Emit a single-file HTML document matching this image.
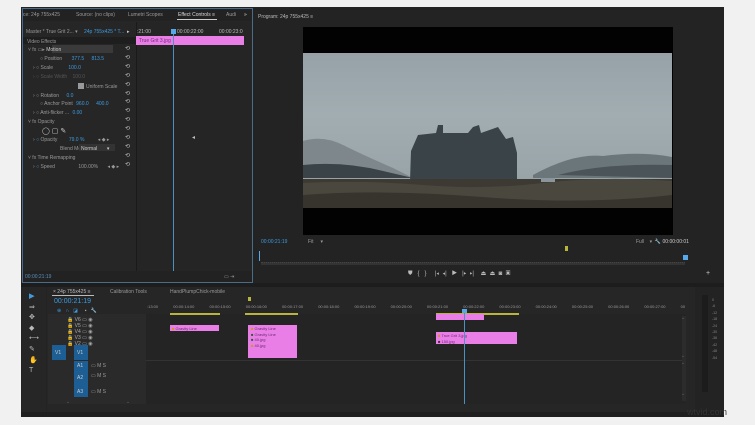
<!DOCTYPE html>
<html><head><meta charset="utf-8"><style>
*{margin:0;padding:0;box-sizing:border-box}
body{width:755px;height:425px;background:#f1f1f1;position:relative;overflow:hidden;font-family:"Liberation Sans",sans-serif;font-size:5px;color:#9a9a9a}
.a{position:absolute}
.blue{color:#3d9be0}
.t{position:absolute;white-space:nowrap}
</style></head><body>
<div class="a" style="left:21px;top:7px;width:703px;height:410px;background:#232323"></div>
<div class="a" style="left:22px;top:8px;width:231px;height:275px;background:#262626;border:1px solid #4b6b8a"></div>
<div class="a" style="left:23px;top:9px;width:229px;height:12px;background:#222"></div>
<div class="t" style="left:23px;top:12px">ce: 24p 755x425</div>
<div class="t" style="left:76px;top:12px">Source: (no clips)</div>
<div class="t" style="left:128px;top:12px">Lumetri Scopes</div>
<div class="t" style="left:178px;top:12px;color:#ddd">Effect Controls ≡</div>
<div class="a" style="left:177px;top:19px;width:40px;height:1px;background:#ccc"></div>
<div class="t" style="left:226px;top:12px">Audi</div>
<div class="t" style="left:244px;top:12px;color:#ddd">»</div>
<div class="a" style="left:23px;top:22px;width:113px;height:260px;background:#262626"></div>
<div class="t" style="left:26px;top:29px">Master * True Grit 2...  ▾</div>
<div class="t blue" style="left:84px;top:29px">24p 755x425 * T...</div>
<div class="t" style="left:127px;top:29px;color:#ccc">▸</div>
<div class="a" style="left:23px;top:37px;width:113px;height:7px;background:#1e1e1e"></div>
<div class="t" style="left:27px;top:39px">Video Effects</div>
<div class="a" style="left:52px;top:45px;width:61px;height:8px;background:#3a3a3a"></div>
<div class="t" style="left:28px;top:47px">˅ fx  ▭▸ <span style="color:#ccc">Motion</span></div>
<div class="t" style="left:40px;top:56px">○ Position <span class="blue" style="margin-left:8px">377.5</span> <span class="blue" style="margin-left:6px">813.5</span></div>
<div class="t" style="left:33px;top:65px">›  ○ Scale <span class="blue" style="margin-left:14px">100.0</span></div>
<div class="t" style="left:33px;top:74px;color:#555">›  ○ Scale Width <span style="margin-left:4px">100.0</span></div>
<div class="a" style="left:78px;top:83px;width:6px;height:6px;background:#999"></div>
<div class="t" style="left:86px;top:84px">Uniform Scale</div>
<div class="t" style="left:33px;top:93px">›  ○ Rotation <span class="blue" style="margin-left:6px">0.0</span></div>
<div class="t" style="left:40px;top:101px">○ Anchor Point <span class="blue" style="margin-left:2px">960.0</span> <span class="blue" style="margin-left:6px">400.0</span></div>
<div class="t" style="left:33px;top:110px">›  ○ Anti-flicker ... <span class="blue" style="margin-left:2px">0.00</span></div>
<div class="t" style="left:28px;top:119px">˅ fx  Opacity</div>
<div class="t" style="left:42px;top:127px;color:#ccc;font-size:7px">◯ ▢ ✎</div>
<div class="t" style="left:33px;top:137px">›  <span class="blue">○</span> Opacity <span class="blue" style="margin-left:10px">79.0 %</span> <span style="margin-left:12px">◂ ◆ ▸</span></div>
<div class="t" style="left:60px;top:146px">Blend Mode</div>
<div class="a" style="left:79px;top:144px;width:36px;height:7px;background:#333"></div>
<div class="t" style="left:81px;top:146px;color:#ccc">Normal &nbsp; &nbsp; &nbsp; ▾</div>
<div class="t" style="left:28px;top:155px">˅ fx  Time Remapping</div>
<div class="t" style="left:33px;top:164px">›  <span class="blue">○</span> Speed <span style="margin-left:22px">100.00%</span> <span style="margin-left:8px">◂ ◆ ▸</span></div>
<div class="a" style="left:125px;top:45px;width:8px;height:125px;color:#bbb;font-size:6px;line-height:8.9px">⟲<br>⟲<br>⟲<br>⟲<br>⟲<br>⟲<br>⟲<br>⟲<br>⟲<br>⟲<br>⟲<br>⟲<br>⟲<br>⟲</div>
<div class="a" style="left:136px;top:22px;width:115px;height:260px;background:#252525;border-left:1px solid #1a1a1a"></div>
<div class="t" style="left:137px;top:29px;color:#bbb">:21:00</div>
<div class="t" style="left:177px;top:29px;color:#bbb">00:00:22:00</div>
<div class="t" style="left:219px;top:29px;color:#bbb">00:00:23:0</div>
<div class="a" style="left:136px;top:36px;width:108px;height:9px;background:#e87ee6"></div>
<div class="t" style="left:139px;top:38px;color:#7a2a80">True Grit 3.jpg</div>
<div class="a" style="left:173px;top:29px;width:1px;height:243px;background:#4a90c0"></div>
<div class="a" style="left:171px;top:29px;width:5px;height:5px;background:#56a8e8"></div>
<div class="t" style="left:192px;top:134px;color:#bbb;font-size:6px">◂</div>
<div class="a" style="left:23px;top:271px;width:229px;height:11px;background:#222"></div>
<div class="t" style="left:25px;top:274px;color:#5a8fbf">00:00:21:19</div>
<div class="t" style="left:224px;top:274px">▭ ⇥</div>
<div class="t" style="left:258px;top:14px;color:#bbb">Program: 24p 755x425 ≡</div>
<div class="a" style="left:303px;top:27px;width:370px;height:208px;background:#020202"></div>
<div class="a" style="left:303px;top:53px;width:369px;height:155px;background:linear-gradient(#96a2a8,#a2adb2 40%,#99a4a9 80%,#7e888d);overflow:hidden">
<svg width="369" height="155" viewBox="0 0 369 155" style="position:absolute;left:0;top:0">
<path d="M0 88 Q20 82 40 92 T90 115 L110 125 L0 125Z" fill="#7d878c"/>
<path d="M0 112 Q40 108 80 118 L110 125 L0 125Z" fill="#3a4347"/>
<path d="M230 122 Q270 100 300 103 Q340 98 369 104 L369 125 L230 125Z" fill="#6b767b"/>
<path d="M255 122 Q300 110 369 112 L369 125 Z" fill="#4a5459"/>
<path d="M107 128 L108 98 L115 82 L133 80 L135 72 L140 72 L140 80 L165 80 L170 74 L176 72 L178 80 L195 74 L203 86 L210 84 L214 100 L214 128Z" fill="#394348"/>
<rect x="0" y="126" width="369" height="29" fill="#3c3a32"/>
<path d="M0 130 Q60 127 120 132 T240 130 T369 128 L369 155 L0 155Z" fill="#4a483e"/>
<path d="M0 142 Q80 136 180 144 T369 142 L369 155 L0 155Z" fill="#36342d"/>
<rect x="238" y="125" width="14" height="4" fill="#8a969b"/>
</svg></div>
<div class="t" style="left:261px;top:239px;color:#3d9be0">00:00:21:19</div>
<div class="t" style="left:308px;top:239px">Fit &nbsp; &nbsp; ▾</div>
<div class="t" style="left:636px;top:239px">Full &nbsp; &nbsp;▾ &nbsp;<span style="color:#ccc">🔧</span> <span style="color:#ccc">00:00:00:01</span></div>
<div class="a" style="left:565px;top:246px;width:3px;height:5px;background:#b9b43a"></div>
<div class="a" style="left:683px;top:255px;width:5px;height:5px;background:#56a8e8"></div>
<div class="a" style="left:259px;top:251px;width:1px;height:10px;background:#56a8e8"></div>
<div class="a" style="left:261px;top:262px;width:424px;height:3px;background:#333;border-top:1px dotted #444"></div>
<div class="t" style="left:408px;top:270px;color:#bbb;font-size:6px;letter-spacing:0">⛊ &nbsp; { &nbsp; } &nbsp; &nbsp; |◂ &nbsp;◂| &nbsp; ▶ &nbsp; |▸ &nbsp;▸| &nbsp; &nbsp;⏏ &nbsp;⏏ &nbsp;◙ &nbsp;▣</div>
<div class="t" style="left:706px;top:270px;color:#ccc;font-size:7px">+</div>
<div class="a" style="left:21px;top:283px;width:703px;height:4px;background:#1d1d1d"></div>
<div class="a" style="left:22px;top:287px;width:24px;height:125px;background:#262626"></div>
<div class="t" style="left:29px;top:292px;color:#bbb;font-size:7px;line-height:10.6px">▶<br>⇒<br>✥<br>◆<br>⟷<br>✎<br>✋<br>T</div>
<div class="t" style="left:29px;top:292px;color:#3d9be0;font-size:7px">▶</div>
<div class="a" style="left:47px;top:287px;width:648px;height:125px;background:#262626"></div>
<div class="t" style="left:53px;top:289px;color:#bbb">× 24p 755x425 ≡</div>
<div class="a" style="left:52px;top:295px;width:42px;height:1px;background:#bbb"></div>
<div class="t" style="left:110px;top:289px">Calibration Tools</div>
<div class="t" style="left:170px;top:289px">HandPlumpChick-mobile</div>
<div class="t" style="left:54px;top:298px;color:#3d9be0;font-size:7px">00:00:21:19</div>
<div class="t" style="left:57px;top:308px;color:#3d9be0;font-size:5px">⊕ &nbsp; ∩ &nbsp; ◪ &nbsp; &nbsp; <span style="color:#aaa">▪ &nbsp; 🔧</span></div>
<div class="a" style="left:48px;top:314px;width:98px;height:90px;background:#2a2a2a"></div>
<div class="t" style="left:67px;top:317px;line-height:6px;color:#aaa">🔒 V6 ▭ ◉<br>🔒 V5 ▭ ◉<br>🔒 V4 ▭ ◉<br>🔒 V3 ▭ ◉<br>🔒 V2 ▭ ◉</div>
<div class="a" style="left:52px;top:345px;width:14px;height:15px;background:#1d5e94"></div>
<div class="a" style="left:74px;top:345px;width:14px;height:15px;background:#1d5e94"></div>
<div class="a" style="left:74px;top:361px;width:14px;height:36px;background:#1d5e94"></div>
<div class="t" style="left:55px;top:350px;color:#ccc">V1</div>
<div class="t" style="left:77px;top:350px;color:#ccc">V1</div>
<div class="t" style="left:77px;top:363px;color:#ccc">A1</div><div class="t" style="left:77px;top:375px;color:#ccc">A2</div><div class="t" style="left:77px;top:389px;color:#ccc">A3</div>
<div class="t" style="left:91px;top:363px">▭ M S</div><div class="t" style="left:91px;top:373px">▭ M S</div><div class="t" style="left:91px;top:389px">▭ M S</div>
<div class="t" style="left:67px;top:400px">◦ &nbsp; &nbsp; &nbsp; &nbsp; &nbsp; &nbsp; &nbsp; &nbsp; &nbsp; &nbsp; &nbsp; &nbsp; &nbsp; &nbsp; &nbsp; &nbsp; &nbsp; &nbsp; &nbsp; &nbsp; &nbsp;◦</div>
<div class="a" style="left:146px;top:314px;width:540px;height:90px;background:#242424"></div>
<div class="a" style="left:146px;top:360px;width:540px;height:1px;background:#333"></div>
<div class="t" style="left:147px;top:304px;font-size:4px;word-spacing:14px">:13:00 00:00:14:00 00:00:15:00 00:00:16:00 00:00:17:00 00:00:18:00 00:00:19:00 00:00:20:00 00:00:21:00 00:00:22:00 00:00:23:00 00:00:24:00 00:00:25:00 00:00:26:00 00:00:27:00 00</div>
<div class="a" style="left:248px;top:297px;width:3px;height:4px;background:#b9b43a"></div>
<div class="a" style="left:170px;top:313px;width:50px;height:2px;background:#b9b43a"></div>
<div class="a" style="left:245px;top:313px;width:53px;height:2px;background:#b9b43a"></div>
<div class="a" style="left:436px;top:313px;width:83px;height:2px;background:#b9b43a"></div>
<div class="a" style="left:170px;top:325px;width:49px;height:6px;background:#e87ee6"></div>
<div class="a" style="left:248px;top:325px;width:49px;height:33px;background:#e87ee6"></div>
<div class="a" style="left:436px;top:314px;width:48px;height:6px;background:#e87ee6"></div>
<div class="a" style="left:436px;top:332px;width:81px;height:12px;background:#e87ee6"></div>
<div class="t" style="left:172px;top:326px;color:#6a2a70;font-size:4px;line-height:5.5px"><span style="color:#c9a000">■</span> Gravity Line</div>
<div class="t" style="left:251px;top:326px;color:#6a2a70;font-size:4px;line-height:5.6px"><span style="color:#c9a000">■</span> Gravity Line<br><span style="color:#2a5a2a">■</span> Gravity Line<br><span style="color:#2a5a2a">■</span> 40.jpg<br><span style="color:#c9a000">■</span> 40.jpg</div>
<div class="t" style="left:438px;top:333px;color:#6a2a70;font-size:4px;line-height:5.6px"><span style="color:#c9a000">■</span> True Grit 3.jpg<br><span style="color:#333">■</span> 150.jpg</div>
<div class="a" style="left:464px;top:312px;width:1px;height:92px;background:#4a90c0"></div>
<div class="a" style="left:462px;top:309px;width:5px;height:4px;background:#56a8e8"></div>
<div class="a" style="left:682px;top:316px;width:4px;height:85px;background:#2c2c2c"></div>
<div class="t" style="left:682px;top:316px;color:#999">◦</div><div class="t" style="left:682px;top:354px;color:#999">◦</div><div class="t" style="left:682px;top:361px;color:#999">◦</div><div class="t" style="left:682px;top:392px;color:#999">◦</div>
<div class="a" style="left:695px;top:287px;width:29px;height:125px;background:#232323"></div>
<div class="a" style="left:702px;top:295px;width:6px;height:97px;background:#1c1c1c"></div>
<div class="t" style="left:712px;top:297px;font-size:3.5px;line-height:6.4px;color:#888">0<br>-6<br>-12<br>-18<br>-24<br>-30<br>-36<br>-42<br>-48<br>-54</div>
<div class="a" style="left:21px;top:412px;width:703px;height:5px;background:#1f1f1f"></div>
<div class="t" style="left:687px;top:407px;color:#333;font-size:9px">wtvid.com</div>
</body></html>
